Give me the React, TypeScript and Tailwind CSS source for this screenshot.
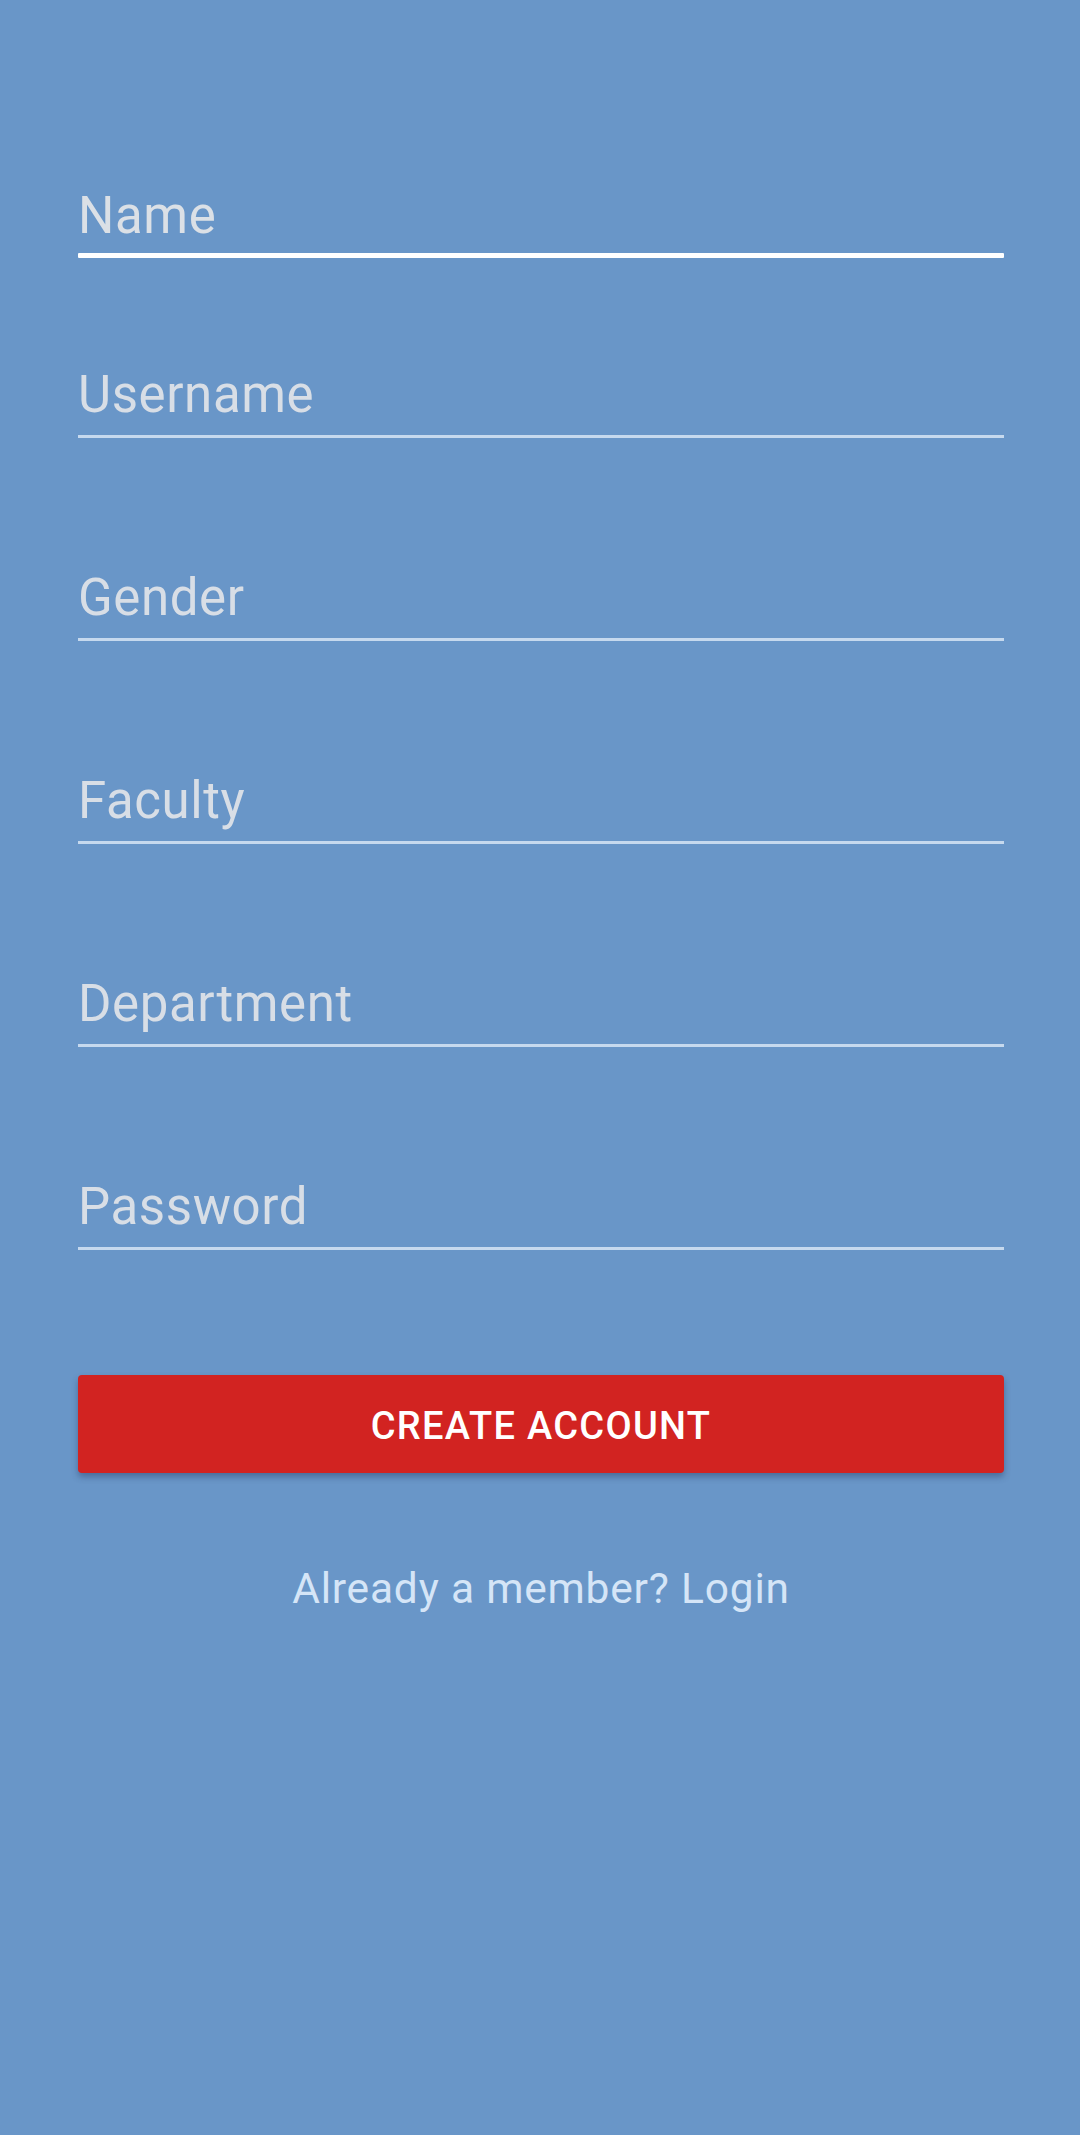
import React from "react";

const fields = ["Username", "Gender", "Faculty", "Department", "Password"];

export default function App() {
  return (
    <div
      className="w-[1080px] h-[2135px] bg-[#6996c8] pl-[78px] pr-[76px] pt-[186px]"
      style={{ fontFamily: "Roboto, 'Noto Sans', sans-serif" }}
    >
      <div>
        <div className="text-[51px] leading-[60px] tracking-[0.6px] text-[#dbe0e6]">Name</div>
        <div className="mt-[7px] h-[5px] bg-white rounded-[1px]" />
      </div>
      <div className="mt-[107px] flex flex-col gap-[130px]">
        {fields.map((f) => (
          <div key={f}>
            <div className="text-[51px] leading-[60px] tracking-[0.6px] text-[#d8dee6]">{f}</div>
            <div className="mt-[10px] h-[3px] bg-[#c6d9ee]" />
          </div>
        ))}
      </div>
      <button className="mt-[125px] w-full h-[98px] pt-[5px] rounded-[4px] bg-[#d22321] text-white font-medium text-[38px] tracking-[1.3px] shadow-[0_4px_6px_rgba(40,60,100,0.45)]">
        CREATE ACCOUNT
      </button>
      <div className="mt-[91px] text-center text-[42.5px] leading-[50px] tracking-[0.8px] text-[#d5e5f7]">
        Already a member? Login
      </div>
    </div>
  );
}
